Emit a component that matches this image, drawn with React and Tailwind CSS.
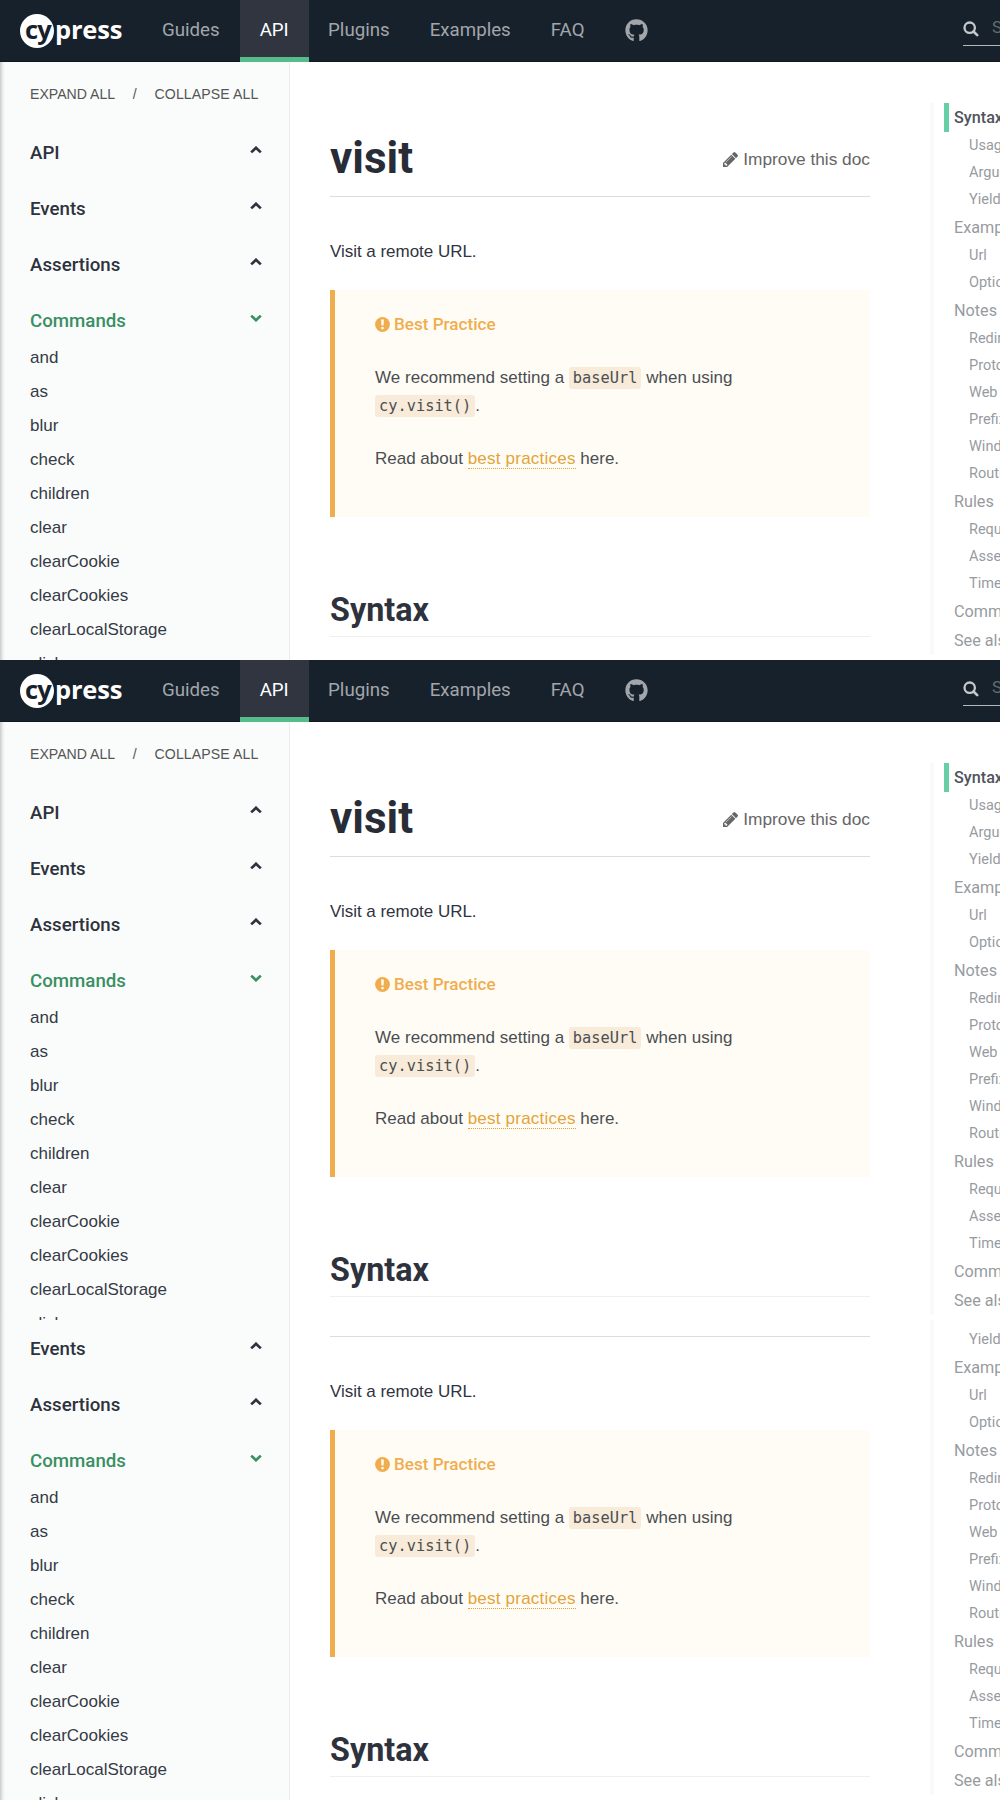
import React from "react";
import { FaGithub } from "react-icons/fa";

const links = ["and", "as", "blur", "check", "children", "clear", "clearCookie", "clearCookies", "clearLocalStorage", "click"];

const toc = [
  { title: "Syntax", active: true, items: ["Usage", "Arguments", "Yields"] },
  { title: "Examples", items: ["Url", "Options"] },
  { title: "Notes", items: ["Redirects", "Protocol", "Web Security", "Prefixes", "Window", "Routing"] },
  { title: "Rules", items: ["Requirements", "Assertions", "Timeouts"] },
  { title: "Command Log", items: [] },
  { title: "See also", items: [] },
];

function Chevron({ open }) {
  return (
    <svg viewBox="0 0 12 8" className="mb-[7px] h-2 w-3" fill="none" stroke="currentColor" strokeWidth="2.7">
      <path d={open ? "M1.2 1.6 6 6.2l4.8-4.6" : "M1.2 6.4 6 1.8l4.8 4.6"} />
    </svg>
  );
}

function Pencil() {
  return (
    <svg viewBox="0 149 1515 1515" className="size-[15px]" fill="currentColor">
      <path d="M363 1536l91 -91l-235 -235l-91 91v107h128v128h107zM886 608q0 -22 -22 -22q-10 0 -17 7l-542 542q-7 7 -7 17q0 22 22 22q10 0 17 -7l542 -542q7 -7 7 -17zM832 416l416 416l-832 832h-416v-416zM1515 512q0 53 -37 90l-166 166l-416 -416l166 -165q36 -38 90 -38q53 0 91 38l235 234q37 39 37 91z" />
    </svg>
  );
}

function Alert() {
  return (
    <svg viewBox="0 0 15 15" className="size-[15px]">
      <circle cx="7.5" cy="7.5" r="7.4" fill="#f0ad4e" />
      <path d="M6.1 2.4h2.8l-.3 6.2H6.4zM6.3 10h2.4v2.3H6.3z" fill="#fffcf5" />
    </svg>
  );
}

function SearchIcon() {
  return (
    <svg viewBox="0 0 16 16" className="size-4 shrink-0 text-[#c5c8ca]" fill="none" stroke="currentColor" strokeWidth="2.3">
      <circle cx="6.7" cy="6.7" r="5.2" />
      <path d="M10.5 10.5l3.7 3.7" strokeWidth="2.6" strokeLinecap="round" />
    </svg>
  );
}

function Logo() {
  return (
    <div className="ml-5 flex h-[62px] w-[122px] shrink-0 items-center font-['Open_Sans'] text-[25.5px] leading-[34px] font-bold">
      <span className="h-[34px] w-[34px] shrink-0 rounded-full bg-white pl-[5px] tracking-[-0.9px] text-[#17212b]">
        <span className="relative -top-[2px]">cy</span>
      </span>
      <span className="relative -top-[2px] ml-px tracking-[-0.2px] text-white">press</span>
    </div>
  );
}

function NavItem({ children }) {
  return <a className="flex h-[62px] items-center px-5 pb-[2px] text-[#a2a6ab]">{children}</a>;
}

function Header() {
  return (
    <header className="flex h-[62px] overflow-hidden bg-[#17212b] font-['Roboto'] text-[18.7px] shadow-[inset_0_-1px_0_#101922]">
      <Logo />
      <NavItem>Guides</NavItem>
      <a className="-mr-[0.6px] flex h-[62px] w-[69px] shrink-0 items-center justify-center border-b-[5px] border-[#56bd8a] bg-[#303540] pt-[3px] text-white">API</a>
      <NavItem>Plugins</NavItem>
      <NavItem>Examples</NavItem>
      <NavItem>FAQ</NavItem>
      <NavItem><FaGithub className="size-[23px]" /></NavItem>
      <div className="mt-[12px] ml-auto flex h-[34px] w-[37px] shrink-0 items-center gap-[13px] overflow-hidden border-b border-[#b5b7ba]">
        <SearchIcon />
        <span className="pb-[1px] text-[17px] text-[#686b6d]">Search</span>
      </div>
    </header>
  );
}

function Sidebar() {
  return (
    <aside className="w-[290px] shrink-0 border-r border-[#ececec] bg-[#fafcfb] pr-[27px] pl-[30px] shadow-[inset_5px_0_4px_-4px_rgba(0,0,0,0.28)]">
      <div className="flex h-[63px] items-center gap-[18px] pt-[2px] text-[14.1px] text-[#555]">
        <span>EXPAND ALL</span>
        <span className="-ml-[0.5px]">/</span>
        <span className="tracking-[0.1px]">COLLAPSE ALL</span>
      </div>
      {["API", "Events", "Assertions", "Commands"].map((t) => (
        <div
          key={t}
          className={`flex h-14 items-center justify-between font-['Roboto'] text-[18.7px] font-medium ${t === "Commands" ? "text-[#3a8f63]" : "text-[#2e323d]"}`}
        >
          <span>{t}</span>
          <Chevron open={t === "Commands"} />
        </div>
      ))}
      <ul className="-mt-2 text-[17px] leading-[34px] text-[#353a45]">
        {links.map((l) => <li key={l}>{l}</li>)}
      </ul>
    </aside>
  );
}

function Code({ children }) {
  return <code className="rounded-[3px] bg-[#f8ebd9] px-1 py-[2px] font-['DejaVu_Sans_Mono'] text-[15.3px]">{children}</code>;
}

function Article() {
  return (
    <main className="w-[540px] shrink-0 text-[17px] leading-7 text-[#30343f]">
      <div className="flex h-[135px] items-end justify-between border-b border-[#dcdcdc]">
        <h1 className="pb-[11px] font-['Roboto'] text-[44px] leading-[54px] font-bold text-[#282c37]">visit</h1>
        <a className="flex items-center gap-[5px] pb-[23px] text-[17.3px] text-[#666]">
          <Pencil />
          Improve this doc
        </a>
      </div>
      <p className="mt-[41px] tracking-[-0.03px]">Visit a remote URL.</p>
      <div className="mt-[24px] h-[227px] border-l-[5px] border-[#f0ad4e] bg-[#fffcf5] pt-5 pl-10 text-[#4a4e52]">
        <h3 className="flex items-center gap-1 font-['Roboto'] text-[17.1px] font-medium text-[#f0ad4e]">
          <Alert />
          Best Practice
        </h3>
        <p className="mt-[26px] tracking-[0.02px]">
          We recommend setting a <Code>baseUrl</Code> when using
          <br />
          <Code>cy.visit()</Code>.
        </p>
        <p className="mt-[25px]">
          Read about <a className="border-b border-dotted border-[#e3a43a] tracking-[0.22px] text-[#e3a43a]">best practices</a> here.
        </p>
      </div>
      <h2 className="mt-[68px] h-[52px] border-b border-[#eee] font-['Roboto'] text-[32.3px] leading-[50px] font-bold text-[#2e323d]">Syntax</h2>
    </main>
  );
}

function Toc() {
  return (
    <nav className="mt-[41px] ml-[60px] h-[552px] grow overflow-hidden border-l-4 border-[#fafafa] pl-[10px] font-['Roboto'] whitespace-nowrap text-[#979b9f]">
      {toc.map((s) => (
        <div key={s.title}>
          <div className={`h-[29px] border-l-[5px] pl-[5px] text-[16.2px] leading-[29px] ${s.active ? "border-[#66cfa6] font-medium text-[#50545e]" : "border-transparent"}`}>{s.title}</div>
          {s.items.map((i) => <div key={i} className="h-[27px] pl-[25px] text-[14.5px] leading-[27px]">{i}</div>)}
        </div>
      ))}
    </nav>
  );
}

function DocsPage() {
  return (
    <section className="h-[660px] w-[1000px] shrink-0 overflow-hidden bg-white">
      <Header />
      <div className="flex h-[598px]">
        <Sidebar />
        <div className="ml-10 flex w-[670px]">
          <Article />
          <Toc />
        </div>
      </div>
    </section>
  );
}

export default function App() {
  return (
    <div className="w-[1000px] font-['Liberation_Sans',sans-serif]">
      <DocsPage />
      <DocsPage />
      <div className="flex h-[480px] flex-col justify-end overflow-hidden">
        <DocsPage />
      </div>
    </div>
  );
}
